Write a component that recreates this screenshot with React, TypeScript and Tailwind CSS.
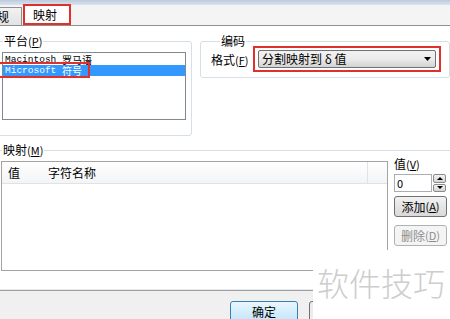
import React from "react"

const cjk = { fontFamily: '"Noto Sans CJK SC", "Liberation Sans", sans-serif' }

function Hot({ k }: { k: string }) {
  return (
    <span className="text-[11px]">
      (<span className="underline">{k}</span>)
    </span>
  )
}

export default function App() {
  return (
    <div
      className="relative w-[450px] h-[319px] overflow-hidden bg-white text-[12px] leading-none text-black"
      style={cjk}
    >
      {/* title bar remnant */}
      <div className="h-[5px] bg-gradient-to-b from-[#bccbdc] to-[#d9e3ee]" />

      {/* tabs */}
      <div className="flex h-[21px] items-end border-b border-[#8e8f8f] bg-[#f4f4f4]">
        <div className="flex h-[18px] w-[22px] items-center overflow-hidden border-r border-t border-[#8e8f8f] bg-gradient-to-b from-[#f2f2f2] to-[#e3e3e3]">
          <span className="-ml-[3px]">规</span>
        </div>
        <div className="ml-[1px] flex h-[21px] w-[48px] items-center border-2 border-[#e0302b] bg-white pl-[8px]">
          映射
        </div>
      </div>

      {/* page */}
      <div className="flex h-[264px] flex-col border-b border-[#e3e9ec]">
        <div className="flex h-[118px] items-start pt-[9px]">
          {/* platform */}
          <fieldset className="-ml-[4px] h-[101px] w-[200px] rounded-[3px] border border-[#d5dfe5] px-[5px]">
            <legend className="ml-[1px] px-[1px] leading-[12px]">
              平台<Hot k="P" />
            </legend>
            <div className="mt-[5px] h-[68px] w-[184px] border border-[#828790] bg-white pt-[1px]">
              <div className="flex h-[11px] items-center pl-[2px]">
                <span className="font-['Liberation_Mono'] text-[9.5px]">Macintosh&nbsp;</span>
                <span className="text-[10px]">罗马语</span>
              </div>
              <div className="relative flex h-[11px] items-center bg-[#3399ff] pl-[2px] text-white">
                <span className="font-['Liberation_Mono'] text-[9.5px]">Microsoft&nbsp;</span>
                <span className="text-[10px]">符号</span>
                <div className="absolute -left-[5px] -top-[3px] h-[16px] w-[92px] border-2 border-[#e0302b]" />
              </div>
            </div>
          </fieldset>

          {/* encoding */}
          <fieldset className="ml-[8px] h-[43px] w-[260px] rounded-[3px] border border-[#d5dfe5] pl-[10px]">
            <legend className="ml-[9px] px-[1px] leading-[12px]">编码</legend>
            <div className="flex items-center">
              <span className="mt-[1px] w-[42px]">
                格式<Hot k="F" />
              </span>
              <div className="-mt-[1px] flex h-[26px] w-[188px] items-center border-2 border-[#e0302b] px-[3px]">
                <div className="flex h-[18px] w-full items-center justify-between rounded-[2px] border border-[#707070] bg-gradient-to-b from-[#f2f2f2] via-[#ebebeb] to-[#d3d3d3] pl-[3px] pr-[4px]">
                  <span>分割映射到 δ 值</span>
                  <svg width="7" height="4" viewBox="0 0 7 4">
                    <path d="M0 0h7L3.5 4z" fill="#000" />
                  </svg>
                </div>
              </div>
            </div>
          </fieldset>
        </div>

        {/* mapping */}
        <fieldset className="-ml-[4px] h-[140px] w-[470px] border-t border-[#d5dfe5] pl-[5px]">
          <legend className="ml-[1px] px-[1px] leading-[12px]">
            映射<Hot k="M" />
          </legend>
          <div className="mt-[5px] flex items-start">
            <div className="h-[110px] w-[387px] border border-[#a3a3a3] bg-white">
              <div className="flex h-[22px] items-center border-b border-[#e2e2e2] bg-gradient-to-b from-white to-[#f3f4f6]">
                <span className="w-[40px] pl-[6px]">值</span>
                <span className="w-[325px] border-l border-transparent pl-[5px]">字符名称</span>
                <span className="h-full border-l border-[#e2e3e5]" />
              </div>
            </div>
            <div className="-mt-[4px] ml-[6px] flex w-[53px] flex-col">
              <span className="mt-[1px] leading-[12px]">
                值<Hot k="V" />
              </span>
              <div className="mt-[4px] flex h-[18px] items-center">
                <div className="flex h-[18px] w-[38px] items-center border border-[#abadb3] pl-[2px] text-[11px]">0</div>
                <div className="ml-[1px] flex h-[18px] w-[13px] flex-col gap-[1px]">
                  <div className="flex flex-1 items-center justify-center rounded-[2px] border border-[#8a8a8a] bg-gradient-to-b from-[#f3f3f3] to-[#d6d6d6]">
                    <svg width="6" height="3" viewBox="0 0 6 3">
                      <path d="M0 3h6L3 0z" fill="#000" />
                    </svg>
                  </div>
                  <div className="flex flex-1 items-center justify-center rounded-[2px] border border-[#8a8a8a] bg-gradient-to-b from-[#f3f3f3] to-[#d6d6d6]">
                    <svg width="6" height="3" viewBox="0 0 6 3">
                      <path d="M0 0h6L3 3z" fill="#000" />
                    </svg>
                  </div>
                </div>
              </div>
              <button className="mt-[4px] flex h-[21px] items-center justify-center rounded-[3px] border border-[#707070] bg-gradient-to-b from-[#f2f2f2] to-[#d9d9d9]">
                添加<Hot k="A" />
              </button>
              <button className="mt-[8px] flex h-[21px] items-center justify-center rounded-[3px] border border-[#adb2b5] bg-[#f4f4f4] text-[#8c8c8c]">
                删除<Hot k="D" />
              </button>
              <button className="mt-[7px] h-[21px] rounded-[3px] border border-[#707070] bg-[#ececec]" />
            </div>
          </div>
        </fieldset>
      </div>

      {/* dialog buttons */}
      <div className="flex h-[29px] items-start border-t border-[#a0a0a0] bg-[#f0f0f0] pl-[230px] pt-[10px]">
        <button className="flex h-[22px] w-[68px] items-center justify-center rounded-[3px] border border-[#3c7fb1] bg-gradient-to-b from-[#eaf6fd] to-[#bee6fd]">
          确定
        </button>
        <button className="ml-[11px] h-[22px] w-[68px] rounded-[3px] border border-[#707070] bg-[#ececec]" />
      </div>

      {/* watermark */}
      <div className="absolute left-[313px] top-[250px] flex h-[69px] w-[137px] items-start bg-white pl-[4px] pt-[16px]">
        <span className="text-[32px] font-light leading-none text-[#cdcdcd]">软件技巧</span>
      </div>
    </div>
  )
}
